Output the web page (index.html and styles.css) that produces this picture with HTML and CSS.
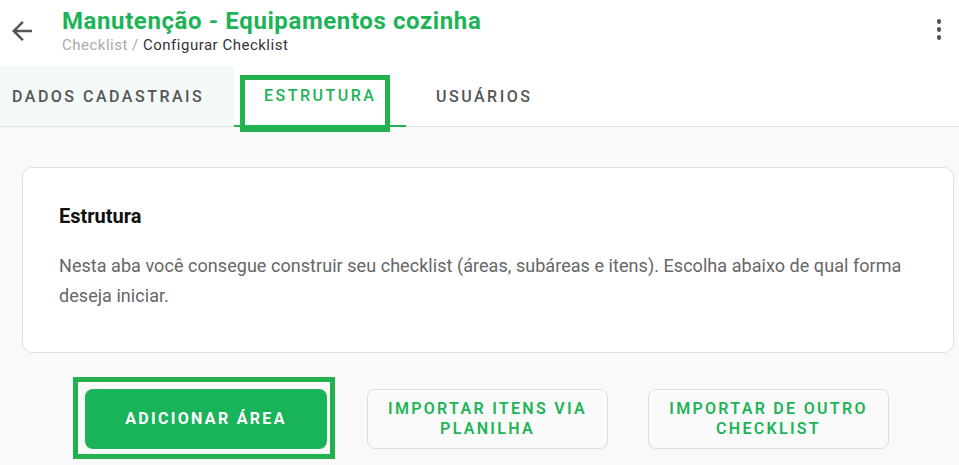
FILE: index.html
```html
<!DOCTYPE html>
<html lang="pt-BR">
<head>
    <meta charset="UTF-8">
    <meta name="viewport" content="width=device-width, initial-scale=1.0">
    <title>Configurar Checklist</title>
    <link rel="stylesheet" href="styles.css">
</head>
<body>
    <div class="header">
        <button class="back" type="button">
            <svg viewBox="0 0 24 24" width="30" height="30"><path d="M20 11H7.83l5.59-5.59L12 4l-8 8 8 8 1.41-1.41L7.83 13H20v-2z" fill="#555"/></svg>
        </button>
        <div class="titles">
            <h1 class="title">Manutenção - Equipamentos cozinha</h1>
            <p class="crumbs"><span class="crumb-link">Checklist /</span> Configurar Checklist</p>
        </div>
        <div class="menu">
            <span class="dot"></span>
            <span class="dot"></span>
            <span class="dot"></span>
        </div>
    </div>

    <div class="tabs">
        <div class="tab tab-first">DADOS CADASTRAIS</div>
        <div class="tab active">
            ESTRUTURA
            <span class="mark mark-tab"></span>
        </div>
        <div class="tab">USUÁRIOS</div>
    </div>

    <div class="content">
        <div class="card">
            <h2 class="card-title">Estrutura</h2>
            <p class="card-text">Nesta aba você consegue construir seu checklist (áreas, subáreas e itens). Escolha abaixo de qual forma deseja iniciar.</p>
        </div>

        <div class="actions">
            <button class="btn btn-primary" type="button">
                ADICIONAR ÁREA
                <span class="mark mark-btn"></span>
            </button>
            <button class="btn btn-outline" type="button">IMPORTAR ITENS VIA PLANILHA</button>
            <button class="btn btn-outline" type="button">IMPORTAR DE OUTRO CHECKLIST</button>
        </div>
    </div>
</body>
</html>
```

FILE: styles.css
```css
*{
    margin: 0;
    padding: 0;
    box-sizing: border-box;
    font-family: Roboto, "Liberation Sans", Arial, sans-serif;
}
body{
    background-color: #f9f9f9;
    width: 959px;
    height: 465px;
    overflow: hidden;
}

/* header */
.header{
    display: flex;
    align-items: flex-start;
    height: 66px;
    background: white;
    padding-left: 7px;
}
.back{
    width: 30px;
    height: 30px;
    margin-top: 16px;
    border: none;
    background: none;
    display: flex;
}
.titles{
    margin-left: 25px;
    padding-top: 7px;
    flex: 1;
}
.title{
    font-size: 24px;
    line-height: 28px;
    font-weight: 700;
    letter-spacing: 0.6px;
    color: #1db457;
}
.crumbs{
    margin-top: 1px;
    font-size: 15px;
    line-height: 18px;
    color: #333;
    letter-spacing: 0.5px;
}
.crumb-link{
    color: #aaa;
}
.menu{
    display: flex;
    flex-direction: column;
    gap: 3.5px;
    margin: 19px 18px 0 0;
}
.dot{
    width: 4.5px;
    height: 4.5px;
    border-radius: 50%;
    background: #555;
}

/* tabs */
.tabs{
    display: flex;
    height: 61px;
    background: white;
    border-bottom: 1px solid #e2e2e2;
}
.tab{
    position: relative;
    display: flex;
    align-items: center;
    padding: 0 30px;
    font-size: 16px;
    font-weight: 500;
    letter-spacing: 2.5px;
    white-space: nowrap;
    color: #555;
}
.tab-first{
    width: 234px;
    padding-left: 12px;
    background: #f3f9f7;
}
.tab.active{
    width: 172px;
    color: #1db457;
    border-bottom: 2px solid #1db457;
    margin-bottom: -1px;
}

/* green annotation boxes */
.mark{
    position: absolute;
    border: 5px solid #22b14c;
    pointer-events: none;
}
.mark-tab{
    left: 6px;
    top: 9px;
    width: 150px;
    height: 57px;
}
.mark-btn{
    left: -12px;
    top: -12px;
    width: 262px;
    height: 82px;
}

/* content */
.content{
    padding: 40px 5px 0 22px;
}
.card{
    background: white;
    border: 1px solid #e0e0e0;
    border-radius: 10px;
    padding: 36px 36px 41px;
}
.card-title{
    font-size: 20px;
    line-height: 24px;
    font-weight: 700;
    color: #111;
}
.card-text{
    margin-top: 23px;
    font-size: 18px;
    line-height: 30px;
    letter-spacing: 0.05px;
    color: #666;
}

.actions{
    display: flex;
    gap: 40px;
    margin-top: 36px;
    padding-left: 63px;
}
.btn{
    position: relative;
    width: 242px;
    height: 60px;
    border-radius: 8px;
    font-size: 16px;
    line-height: 20px;
    font-weight: 700;
    letter-spacing: 2.3px;
    padding: 0 16px;
    cursor: pointer;
}
.btn-primary{
    border: none;
    background: #19b35a;
    color: white;
}
.btn-outline{
    width: 241px;
    border: 1px solid #dcdcdc;
    background: #fafafa;
    color: #1db457;
    font-weight: 600;
}
```
